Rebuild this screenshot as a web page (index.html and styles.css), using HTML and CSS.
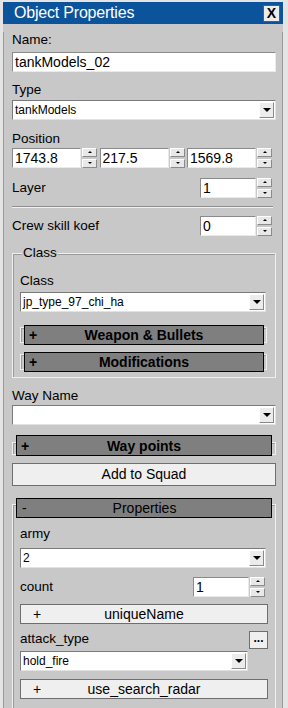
FILE: index.html
```html
<!DOCTYPE html>
<html>
<head>
    <title>Object Properties</title>
    <link rel="stylesheet" href="styles.css">
</head>
<body>
<div class="window">
    <div class="titlebar">
        <span class="title">Object Properties</span>
        <span class="close">X</span>
    </div>
    <div class="panel">
        <div class="label name-label">Name:</div>
        <div class="field text">tankModels_02</div>

        <div class="label type-label">Type</div>
        <div class="select type-select"><span>tankModels</span><i class="drop"></i></div>

        <div class="label pos-label">Position</div>
        <div class="row pos-row">
            <div class="spinbox wide"><div class="field num">1743.8</div><div class="spin"><b class="up"></b><b class="down"></b></div></div>
            <div class="spinbox wide"><div class="field num">217.5</div><div class="spin"><b class="up"></b><b class="down"></b></div></div>
            <div class="spinbox wide"><div class="field num">1569.8</div><div class="spin"><b class="up"></b><b class="down"></b></div></div>
        </div>

        <div class="row layer-row">
            <span class="label">Layer</span>
            <div class="spinbox"><div class="field num">1</div><div class="spin"><b class="up"></b><b class="down"></b></div></div>
        </div>

        <div class="sep"></div>

        <div class="row crew-row">
            <span class="label">Crew skill koef</span>
            <div class="spinbox"><div class="field num">0</div><div class="spin"><b class="up"></b><b class="down"></b></div></div>
        </div>

        <div class="group">
            <div class="group-title">Class</div>
            <div class="label class-label">Class</div>
            <div class="select class-select"><span>jp_type_97_chi_ha</span><i class="drop"></i></div>
            <div class="fold fold-weapon"><div class="bar bold"><span class="sign">+</span><span class="bar-text">Weapon &amp; Bullets</span></div></div>
            <div class="fold fold-mods"><div class="bar bold"><span class="sign">+</span><span class="bar-text">Modifications</span></div></div>
        </div>

        <div class="label way-label">Way Name</div>
        <div class="select way-select"><span></span><i class="drop"></i></div>

        <div class="fold fold-way"><div class="bar bold"><span class="sign">+</span><span class="bar-text">Way points</span></div></div>

        <div class="button squad-btn">Add to Squad</div>

        <div class="props">
            <div class="bar props-bar"><span class="sign">-</span><span class="bar-text">Properties</span></div>

            <div class="label army-label">army</div>
            <div class="select army-select"><span>2</span><i class="drop"></i></div>

            <div class="row count-row">
                <span class="label">count</span>
                <div class="spinbox"><div class="field num">1</div><div class="spin"><b class="up"></b><b class="down"></b></div></div>
            </div>

            <div class="button prop-btn unique-btn"><span class="sign">+</span><span class="bar-text">uniqueName</span></div>

            <div class="attack">
                <div class="attack-main">
                    <div class="label">attack_type</div>
                    <div class="select attack-select"><span>hold_fire</span><i class="drop"></i></div>
                </div>
                <div class="dots">...</div>
            </div>

            <div class="button prop-btn radar-btn"><span class="sign">+</span><span class="bar-text">use_search_radar</span></div>
        </div>
    </div>
</div>
</body>
</html>
```

FILE: styles.css
```css
/* Page */
body {
    margin: 0;
    background: #e8e8e8;
    font-family: "Liberation Sans", Arial, sans-serif;
    color: #000;
    overflow: hidden;
}

/* Window frame */
.window {
    height: 706px;
    border-style: solid;
    border-width: 2px 5px 0 3px;
    border-color: #e4e4e4;
    background: #c8c8c8;
}

.titlebar {
    height: 22px;
    background: #0b539b;
    display: flex;
    align-items: center;
    justify-content: space-between;
    padding: 0 3px 0 11px;
}

.title {
    color: #fff;
    font-size: 16px;
    letter-spacing: -0.2px;
}

.close {
    width: 15px;
    height: 15px;
    background: #ececec;
    border: 1px solid #5a5a5a;
    font-size: 14px;
    font-weight: bold;
    line-height: 15px;
    text-align: center;
}

.panel {
    height: 684px;
    border-left: 1px solid #9a9a9a;
    border-right: 1px solid #9a9a9a;
    padding: 0 6px 0 8px;
}

/* Labels and fields */
.label {
    font-size: 13.5px;
    line-height: 16px;
    height: 16px;
}

.field {
    height: 18px;
    background: #fff;
    border: 1px solid;
    border-color: #8a8a8a #eaeaea #eaeaea #8a8a8a;
    font-size: 14px;
    line-height: 19px;
    padding-left: 2px;
    white-space: nowrap;
    overflow: hidden;
}

.select {
    height: 18px;
    background: #fff;
    border: 1px solid;
    border-color: #7a7a7a #e2e2e2 #e2e2e2 #7a7a7a;
    display: flex;
    align-items: center;
    justify-content: space-between;
    font-size: 12px;
    padding-left: 2px;
}

.drop {
    width: 13px;
    height: 14px;
    margin-right: 1px;
    background: #ececec;
    border: 1px solid;
    border-color: #fff #8a8a8a #8a8a8a #fff;
    position: relative;
}

.drop::after {
    content: "";
    position: absolute;
    left: 3px;
    top: 5px;
    border-left: 4px solid transparent;
    border-right: 4px solid transparent;
    border-top: 4px solid #000;
}

.name-label { margin-top: 8px; }
.text { margin-top: 4px; }
.type-label { margin-top: 10px; }
.type-select { margin-top: 2px; }
.pos-label { margin-top: 11px; }

/* Spin boxes */
.row {
    display: flex;
    align-items: center;
    justify-content: space-between;
    padding-right: 4px;
}

.spinbox {
    display: flex;
    gap: 1px;
}

.spinbox .field {
    width: 52px;
}

.spinbox.wide .field {
    width: 65px;
}

.spin {
    width: 15px;
    height: 20px;
    display: flex;
    flex-direction: column;
    gap: 2px;
}

.spin b {
    flex: 1;
    background: #e8e8e8;
    border: 1px solid;
    border-color: #fff #8a8a8a #8a8a8a #fff;
    position: relative;
}

.spin b::after {
    content: "";
    position: absolute;
    left: 5px;
    top: 2px;
    border-left: 2px solid transparent;
    border-right: 2px solid transparent;
}

.spin .up::after {
    border-bottom: 2px solid #000;
}

.spin .down::after {
    border-top: 2px solid #000;
}

.pos-row { margin-top: 1px; }
.layer-row { margin-top: 10px; }
.crew-row { margin-top: 8px; }

.sep {
    margin: 8px 3px 0 0;
    height: 0;
    border-top: 1px solid #8e8e8e;
    border-bottom: 1px solid #f2f2f2;
}

/* Class group */
.group {
    margin-top: 17px;
    border: 1px solid #efefef;
    box-shadow: inset 1px 1px #9a9a9a;
    padding: 0 9px 7px 7px;
}

.group-title {
    width: max-content;
    margin: -9px 0 0 2px;
    padding: 0 1px;
    background: #c8c8c8;
    font-size: 13.5px;
    line-height: 16px;
    height: 16px;
}

.class-label { margin-top: 12px; }
.class-select { margin-top: 3px; }

/* Collapsible headers */
.fold {
    border: 1px solid #efefef;
    box-shadow: inset 1px 1px #9a9a9a;
}

.bar {
    height: 18px;
    background: #7f7f7f;
    border: 1px solid #000;
    display: flex;
    align-items: center;
    font-size: 14px;
}

.bold {
    font-weight: bold;
}

.sign {
    width: 18px;
    padding-left: 4px;
    flex: none;
}

.bar-text {
    flex: 1;
    text-align: center;
    padding-right: 22px;
}

.fold-weapon, .fold-mods {
    height: 14px;
    margin-right: -1px;
}

.fold-weapon { margin-top: 15px; }
.fold-mods { margin-top: 11px; }

.fold-weapon .bar, .fold-mods .bar {
    margin: -3px 2px 0 3px;
}

.way-label { margin-top: 10px; }
.way-select { margin-top: 1px; }

.fold-way {
    margin-top: 17px;
    height: 11px;
}

.fold-way .bar {
    height: 19px;
    margin: -8px 3px 0 3px;
}

/* Plain buttons */
.button {
    background: #efefef;
    border: 1px solid #6e6e6e;
    font-size: 14px;
    text-align: center;
}

.squad-btn {
    margin-top: 8px;
    height: 21px;
    line-height: 21px;
}

/* Properties block */
.props {
    margin-top: 18px;
    height: 220px;
    border: 1px solid #efefef;
    border-bottom: none;
    box-shadow: inset 1px 1px #9a9a9a;
    padding: 0 9px 0 7px;
}

.props-bar {
    font-weight: normal;
    margin: -7px -6px 0 -4px;
}

.props-bar .sign {
    padding-left: 5px;
}

.army-label { margin-top: 8px; }
.army-select { margin-top: 6px; }

.count-row {
    margin-top: 9px;
    padding-right: 1px;
}

.prop-btn {
    display: flex;
    align-items: center;
    height: 18px;
    margin-right: -2px;
}

.prop-btn .sign {
    width: 36px;
    padding-left: 12px;
    text-align: left;
}

.prop-btn .bar-text {
    padding-right: 48px;
}

.unique-btn { margin-top: 7px; }

.attack {
    margin-top: 7px;
    display: flex;
    gap: 1px;
    margin-right: -2px;
}

.attack-main {
    flex: 1;
}

.attack-select { margin-top: 4px; }

.dots {
    width: 17px;
    height: 16px;
    margin-top: 0;
    background: #efefef;
    border: 1px solid #6e6e6e;
    font-size: 12px;
    font-weight: bold;
    line-height: 12px;
    text-align: center;
}

.radar-btn { margin-top: 8px; }
```
